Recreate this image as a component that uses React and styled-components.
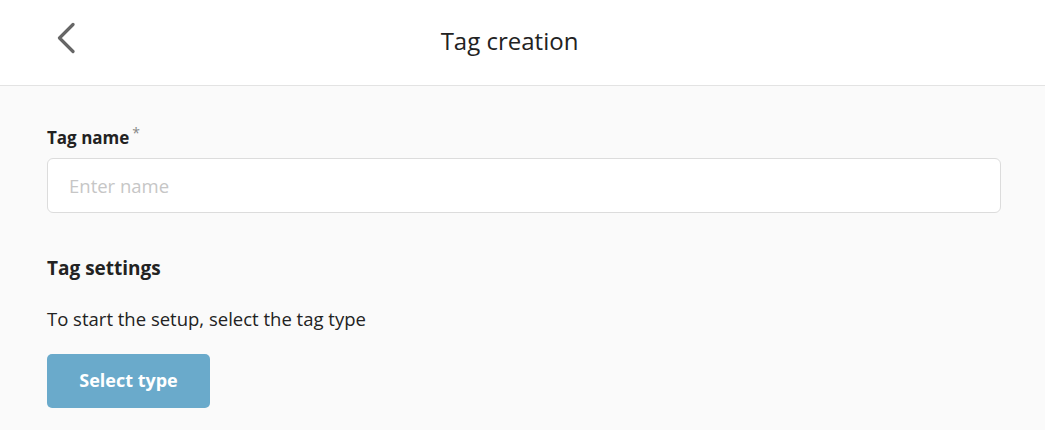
import React from 'react'
import styled, { createGlobalStyle } from 'styled-components'

const GlobalStyle = createGlobalStyle`
    html, body {
        margin: 0;
        padding: 0;
        background: #fafafa;
        font-family: "Open Sans", "Noto Sans", sans-serif;
        color: #222;
    }
`

const Header = styled.header`
    height: 85px;
    background: #fff;
    border-bottom: 1px solid #e3e3e3;
    display: grid;
    grid-template-columns: 120px 1fr 146px;
    align-items: center;
`

const BackButton = styled.button`
    align-self: start;
    border: none;
    background: none;
    padding: 0;
    margin: 22px 0 0 57px;
    width: 18px;
    height: 32px;
    display: flex;
    cursor: pointer;
`

const Title = styled.h1`
    margin: 0 0 4px;
    text-align: center;
    font-size: 24px;
    line-height: 32px;
    font-weight: 400;
    color: #222;
`

const Content = styled.main`
    padding: 40px 44px 0 47px;
    display: flex;
    flex-direction: column;
`

const Label = styled.label`
    font-size: 17px;
    line-height: 24px;
    font-weight: 700;
    color: #222;
    display: flex;
    align-items: flex-start;
    gap: 3px;
`

const Required = styled.span`
    color: #888;
    font-size: 14px;
    line-height: 14px;
    font-weight: 400;
`

const Input = styled.input`
    margin-top: 8px;
    height: 55px;
    box-sizing: border-box;
    border: 1px solid #dcdcdc;
    border-radius: 6px;
    background: #fff;
    padding: 0 21px;
    font-family: inherit;
    font-size: 18.5px;
    color: #222;
    outline: none;

    &::placeholder{
        color: #c6c6c6;
    }
`

const SectionTitle = styled.h2`
    margin: 42px 0 0;
    font-size: 19px;
    line-height: 26px;
    font-weight: 700;
    color: #222;
`

const Hint = styled.p`
    margin: 25px 0 0;
    font-size: 18.5px;
    line-height: 26px;
    color: #222;
`

const PrimaryButton = styled.button`
    margin-top: 22px;
    width: 163px;
    height: 54px;
    padding: 0 0 2px;
    border: none;
    border-radius: 5px;
    background: #6aaacb;
    color: #fff;
    font-family: inherit;
    font-size: 18px;
    font-weight: 700;
    cursor: pointer;
`

const App = () => {
    return(
        <>
        <GlobalStyle/>
        <Header>
            <BackButton aria-label="Back">
                <svg width="18" height="32" viewBox="0 0 18 32" fill="none">
                    <path d="M16 2.5 L2.5 16 L16 29.5" stroke="#666" strokeWidth="3.2" strokeLinecap="round" strokeLinejoin="round"/>
                </svg>
            </BackButton>
            <Title>Tag creation</Title>
            <div/>
        </Header>
        <Content>
            <Label htmlFor="tag-name">Tag name<Required>*</Required></Label>
            <Input id="tag-name" placeholder="Enter name"/>
            <SectionTitle>Tag settings</SectionTitle>
            <Hint>To start the setup, select the tag type</Hint>
            <div>
                <PrimaryButton>Select type</PrimaryButton>
            </div>
        </Content>
        </>
    )
}

export default App
